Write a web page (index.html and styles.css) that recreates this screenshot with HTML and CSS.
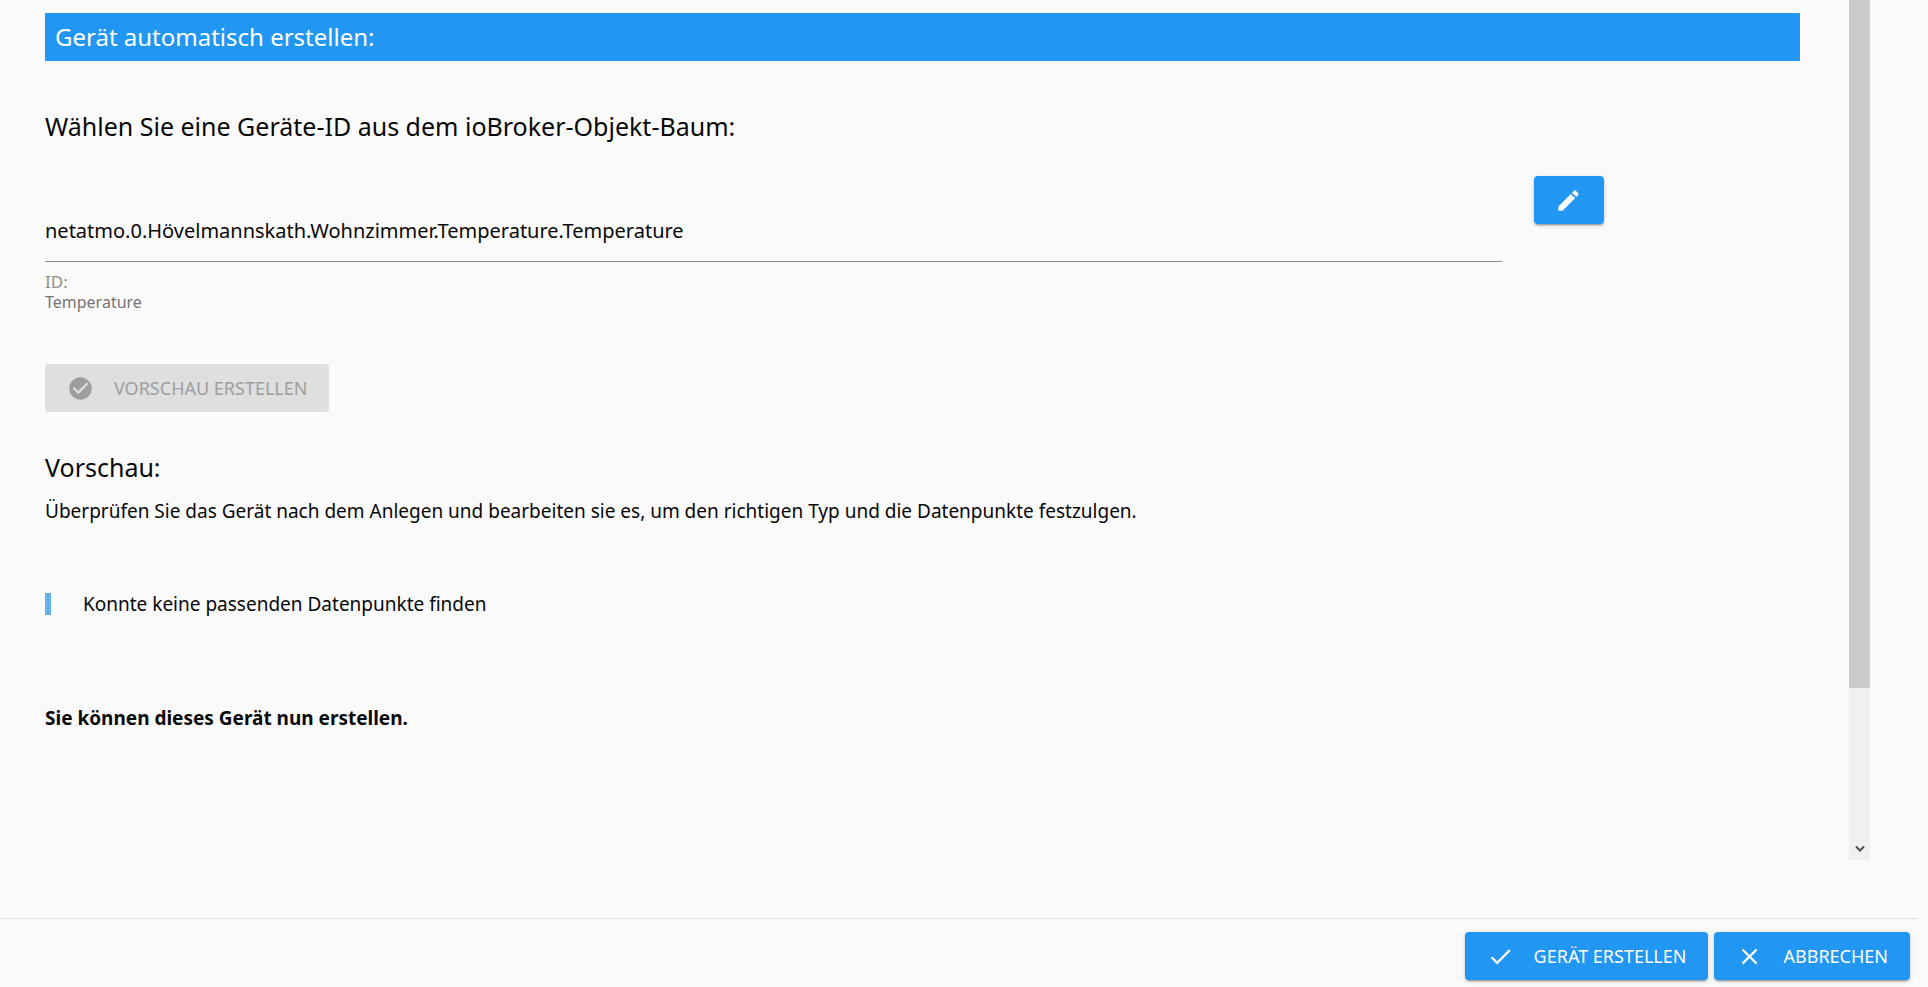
FILE: index.html
```html
<!DOCTYPE html>
<html lang="de">
<head>
<meta charset="utf-8">
<meta name="viewport" content="width=device-width, initial-scale=1">
<title>Gerät automatisch erstellen</title>
<link rel="stylesheet" href="styles.css">
</head>
<body>
<div class="dialog">
  <div class="body">
    <main class="content">
      <h1 class="banner">Gerät automatisch erstellen:</h1>
      <h2 class="heading">Wählen Sie eine Geräte-ID aus dem ioBroker-Objekt-Baum:</h2>
      <div class="picker">
        <div class="field">
          <input class="field-input" id="device-id" type="text" value="netatmo.0.Hövelmannskath.Wohnzimmer.Temperature.Temperature" aria-describedby="device-name">
          <label class="field-label" for="device-id">ID:</label>
          <span class="field-helper" id="device-name">Temperature</span>
        </div>
        <button class="button button-icon" type="button" aria-label="ID auswählen">
          <svg class="icon" viewBox="0 0 24 24" aria-hidden="true"><path d="M3 17.25V21h3.750L17.810 9.940l-3.750-3.750L3 17.250zM20.710 7.040c.390-.390.390-1.020 0-1.410l-2.340-2.340c-.390-.390-1.020-.390-1.410 0l-1.830 1.830 3.750 3.750 1.830-1.830z"/></svg>
        </button>
      </div>
      <button class="button button-preview" type="button" disabled>
        <svg class="icon" viewBox="0 0 24 24" aria-hidden="true"><path d="M12 2C6.480 2 2 6.480 2 12s4.480 10 10 10 10-4.480 10-10S17.520 2 12 2zm-2 15l-5-5 1.410-1.410L10 14.170l7.590-7.590L19 8l-9 9z"/></svg>
        <span>VORSCHAU ERSTELLEN</span>
      </button>
      <h2 class="heading heading-preview">Vorschau:</h2>
      <p class="text">Überprüfen Sie das Gerät nach dem Anlegen und bearbeiten sie es, um den richtigen Typ und die Datenpunkte festzulgen.</p>
      <p class="notice">Konnte keine passenden Datenpunkte finden</p>
      <p class="ready">Sie können dieses Gerät nun erstellen.</p>
    </main>
    <div class="scrollbar" aria-hidden="true">
      <div class="scrollbar-thumb"></div>
      <svg class="scrollbar-arrow" viewBox="0 0 10 8"><path d="M1 1.500L5 5.500L9 1.500"/></svg>
    </div>
  </div>
  <footer class="actions">
    <button class="button" type="button">
      <svg class="icon" viewBox="0 0 24 24" aria-hidden="true"><path d="M9 16.170L4.830 12l-1.420 1.410L9 19 21 7l-1.410-1.410z"/></svg>
      <span>GERÄT ERSTELLEN</span>
    </button>
    <button class="button" type="button">
      <svg class="icon" viewBox="0 0 24 24" aria-hidden="true"><path d="M19 6.410L17.590 5 12 10.590 6.410 5 5 6.410 10.590 12 5 17.590 6.410 19 12 13.410 17.590 19 19 17.590 13.410 12z"/></svg>
      <span>ABBRECHEN</span>
    </button>
  </footer>
</div>
</body>
</html>
```
FILE: styles.css
```css
* {
  box-sizing: border-box;
}

body {
  margin: 0;
  background: #fafafa;
  color: #080808;
  font-family: "Noto Sans", "Open Sans", sans-serif;
  font-size: 19px;
}

h1, h2, p {
  margin: 0;
}

.dialog {
  display: flex;
  flex-direction: column;
  min-height: 100vh;
}

.body {
  flex: 1;
  display: flex;
  padding: 0 58px 58px 45px;
}

.content {
  flex: 1;
  min-width: 0;
  padding: 13px 49px 0 0;
}

.banner {
  padding: 0 10px;
  background: #2196f3;
  color: #fff;
  font-size: 24px;
  font-weight: 400;
  line-height: 48px;
}

.heading {
  margin-top: 49px;
  font-size: 25px;
  font-weight: 400;
  line-height: 32px;
}

.picker {
  display: flex;
  align-items: flex-start;
  gap: 32px;
  margin-top: 34px;
}

.field {
  flex: 0 1 83%;
  display: flex;
  flex-direction: column;
  padding-top: 24px;
}

.field-input {
  width: 100%;
  height: 62px;
  padding: 0;
  border: 0;
  border-bottom: 1px solid #8c8c8c;
  outline: 0;
  background: transparent;
  color: #080808;
  font-family: inherit;
  font-size: 20px;
}

.field-label {
  margin-top: 10px;
  color: #8e8e8e;
  font-size: 17px;
  line-height: 20px;
}

.field-helper {
  color: #757575;
  font-size: 16px;
  line-height: 20px;
}

.button {
  display: inline-flex;
  align-items: center;
  gap: 20px;
  height: 48px;
  padding: 0 22px;
  border: 0;
  border-radius: 4px;
  background: #2196f3;
  box-shadow: 0 3px 1px -2px rgba(0, 0, 0, 0.2), 0 2px 2px rgba(0, 0, 0, 0.14), 0 1px 5px rgba(0, 0, 0, 0.12);
  color: #fff;
  font-family: inherit;
  font-size: 18px;
}

.button-icon {
  justify-content: center;
  width: 70px;
  padding: 0;
}

.button-preview {
  margin-top: 52px;
  background: #dfdfdf;
  box-shadow: none;
  color: #9e9e9e;
}

.icon {
  width: 27px;
  height: 27px;
  flex: none;
  fill: currentColor;
}

.heading-preview {
  margin-top: 39px;
}

.text {
  margin-top: 16px;
  line-height: 24px;
}

.notice {
  margin-top: 70px;
  padding-left: 32px;
  border-left: 6px solid #64b1ec;
  line-height: 22px;
}

.ready {
  margin-top: 91px;
  font-weight: 700;
  line-height: 24px;
}

.scrollbar {
  display: flex;
  flex-direction: column;
  align-items: center;
  width: 21px;
  background: #f0f0f0;
}

.scrollbar-thumb {
  width: 100%;
  height: 80%;
  background: #cbcbcb;
}

.scrollbar-arrow {
  width: 10px;
  height: 8px;
  margin: auto 0 7px;
  fill: none;
  stroke: #505050;
  stroke-width: 2;
}

.actions {
  display: flex;
  justify-content: flex-end;
  gap: 6px;
  margin-right: 10px;
  padding: 13px 8px 7px;
  border-top: 1px solid #e0e0e0;
}
```
